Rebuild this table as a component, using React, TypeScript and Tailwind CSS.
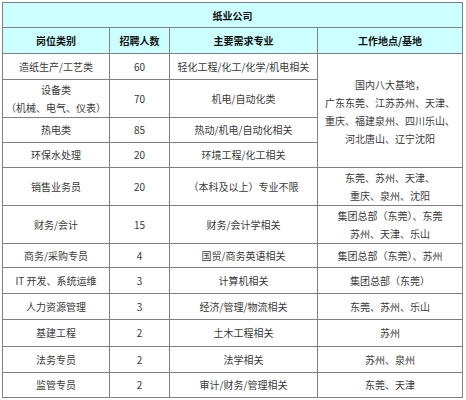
import React from "react";

type Row = {
  role: string[];
  count: string;
  major: string;
  place?: string[];
  h: string;
};

const rows: Row[] = [
  { role: ["造纸生产/工艺类"], count: "60", major: "轻化工程/化工/化学/机电相关", h: "h-[25px]" },
  { role: ["设备类", "（机械、电气、仪表）"], count: "70", major: "机电/自动化类", h: "h-[37px]" },
  { role: ["热电类"], count: "85", major: "热动/机电/自动化相关", h: "h-[24px]" },
  { role: ["环保水处理"], count: "20", major: "环境工程/化工相关", h: "h-[24px]" },
  { role: ["销售业务员"], count: "20", major: "（本科及以上）专业不限", place: ["东莞、苏州、天津、", "重庆、泉州、沈阳"], h: "h-[37px]" },
  { role: ["财务/会计"], count: "15", major: "财务/会计学相关", place: ["集团总部（东莞）、东莞", "苏州、天津、乐山"], h: "h-[37px]" },
  { role: ["商务/采购专员"], count: "4", major: "国贸/商务英语相关", place: ["集团总部（东莞）、苏州"], h: "h-[23px]" },
  { role: ["IT 开发、系统运维"], count: "3", major: "计算机相关", place: ["集团总部（东莞）"], h: "h-[25px]" },
  { role: ["人力资源管理"], count: "3", major: "经济/管理/物流相关", place: ["东莞、苏州、乐山"], h: "h-[25px]" },
  { role: ["基建工程"], count: "2", major: "土木工程相关", place: ["苏州"], h: "h-[26px]" },
  { role: ["法务专员"], count: "2", major: "法学相关", place: ["苏州、泉州"], h: "h-[25px]" },
  { role: ["监管专员"], count: "2", major: "审计/财务/管理相关", place: ["东莞、天津"], h: "h-[24px]" },
];

const cell = "bg-white flex flex-col items-center justify-center text-center leading-[18px]";

export default function App() {
  return (
    <div className="bg-white w-[466px] h-[400px] pt-[2px] pl-[2px] font-['Noto_Sans_CJK_SC',sans-serif] text-[10px] text-[#3a3a3a]">
      <div className="grid grid-cols-[106px_59px_147px_144px] gap-px bg-[#808080] p-px w-[461px]">
        {/* 标题 */}
        <div className="col-span-4 h-[24px] bg-[#ccffff] flex items-center justify-center font-bold text-[#111]">
          纸业公司
        </div>

        {/* 表头 */}
        {["岗位类别", "招聘人数", "主要需求专业", "工作地点/基地"].map((t) => (
          <div key={t} className="h-[25px] bg-[#ccffff] flex items-center justify-center font-bold text-[#111]">
            {t}
          </div>
        ))}

        {rows.map((r, i) => (
          <React.Fragment key={i}>
            <div className={`${cell} ${r.h}`}>
              {r.role.map((l) => (
                <span key={l}>{l}</span>
              ))}
            </div>
            <div className={`${cell} ${r.h}`}>{r.count}</div>
            <div className={`${cell} ${r.h}`}>{r.major}</div>
            {i === 0 && (
              <div className={`${cell} row-span-4 pt-[2px]`}>
                <span>国内八大基地，</span>
                <span>广东东莞、江苏苏州、天津、</span>
                <span>重庆、福建泉州、四川乐山、</span>
                <span>河北唐山、辽宁沈阳</span>
              </div>
            )}
            {r.place && (
              <div className={`${cell} ${r.h}`}>
                {r.place.map((l) => (
                  <span key={l}>{l}</span>
                ))}
              </div>
            )}
          </React.Fragment>
        ))}
      </div>
    </div>
  );
}
